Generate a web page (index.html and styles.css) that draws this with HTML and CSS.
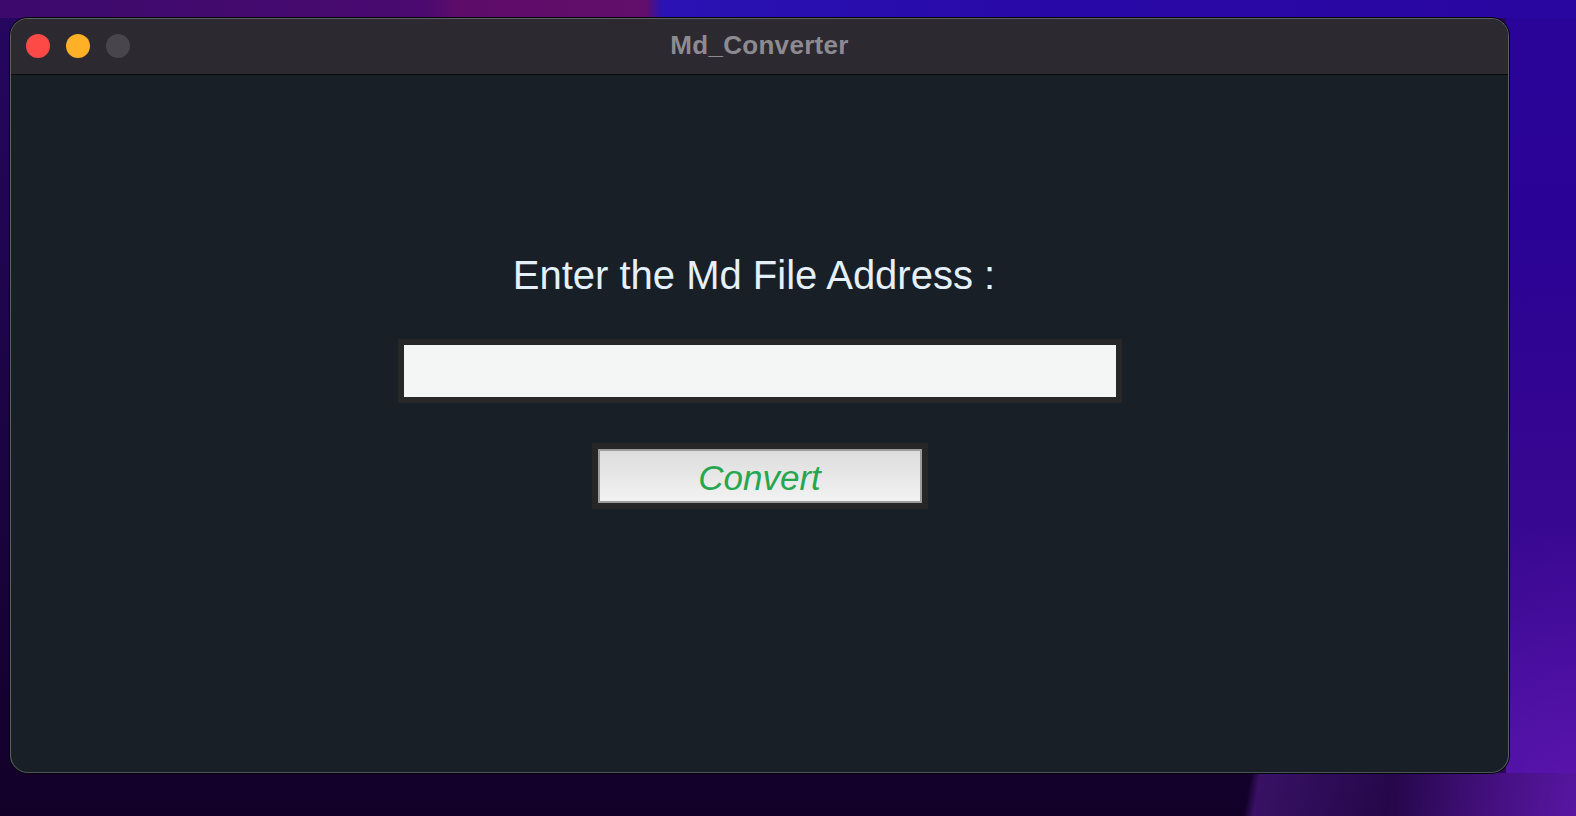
FILE: index.html
```html
<!DOCTYPE html>
<html lang="en">
<head>
<meta charset="utf-8">
<title>Md_Converter</title>
<link rel="stylesheet" href="styles.css">
</head>
<body>
<div class="desktop">
  <div class="window">
    <div class="titlebar">
      <div class="lights">
        <span class="light red"></span>
        <span class="light yellow"></span>
        <span class="light gray"></span>
      </div>
      <div class="title">Md_Converter</div>
    </div>
    <div class="content">
      <div class="label">Enter the Md File Address :&nbsp;</div>
      <input class="address" type="text">
      <button class="convert" type="button">Convert</button>
    </div>
  </div>
</div>
</body>
</html>
```

FILE: styles.css
```css
html, body {
  margin: 0;
  padding: 0;
}

body {
  width: 1576px;
  height: 816px;
  overflow: hidden;
  font-family: "Liberation Sans", Arial, sans-serif;
}

.desktop {
  width: 1576px;
  height: 816px;
  padding: 18px 0 0 10px;
  box-sizing: border-box;
  background:
    linear-gradient(100deg, transparent 0 79%, rgba(80, 28, 140, 0.6) 79.6%, rgba(55, 14, 105, 0.5) 88%, rgba(95, 25, 175, 0.75) 100%) bottom / 100% 43px no-repeat,
    radial-gradient(ellipse 260px 420px at 100% 100%, rgba(100, 20, 180, 0.6), transparent 70%),
    linear-gradient(90deg, #3c0a6c 0%, #4a0a70 27%, #5e0c6a 29%, #620e6a 41%, #2a12b4 42%, #2808a6 70%, #2a06a0 100%) top / 100% 18px no-repeat,
    linear-gradient(180deg, #2a0398 0%, #2a0396 30%, #340590 55%, #3c0a94 80%, #4a12a0 100%) right top / 70px 773px no-repeat,
    linear-gradient(180deg, #260660 0%, #1a0440 60%, #130028 100%);
}

.window {
  width: 1499px;
  height: 755px;
  box-sizing: border-box;
  border: 1px solid #5d6064;
  border-bottom-color: #4a5357;
  border-radius: 18px;
  box-shadow: 0 0 0 1px #050507;
  overflow: hidden;
  display: flex;
  flex-direction: column;
  background: #181f26;
}

.titlebar {
  height: 55px;
  flex: none;
  background: #2c2930;
  border-bottom: 1px solid #0a0a0c;
  display: flex;
  align-items: center;
  position: relative;
}

.lights {
  display: flex;
  gap: 16px;
  padding-left: 15px;
  padding-bottom: 1px;
}

.light {
  width: 24px;
  height: 24px;
  border-radius: 50%;
  display: block;
}

.light.red { background: #fe4a47; }
.light.yellow { background: #feb026; }
.light.gray { background: #48454c; }

.title {
  position: absolute;
  left: 0;
  right: 0;
  top: 0;
  bottom: 0;
  display: flex;
  align-items: center;
  justify-content: center;
  font-weight: bold;
  font-size: 26px;
  color: #8d8b91;
  padding-bottom: 3px;
  letter-spacing: 0.3px;
}

.content {
  flex: 1;
  display: flex;
  flex-direction: column;
  align-items: center;
  padding-top: 177px;
}

.label {
  font-size: 40px;
  line-height: 46px;
  color: #e4f0fa;
  white-space: nowrap;
}

.address {
  margin-top: 41px;
  width: 724px;
  height: 64px;
  box-sizing: border-box;
  border: 6px solid #272727;
  background: #f4f6f5;
  outline: none;
  padding: 0 6px;
  font-size: 20px;
  font-family: "Liberation Sans", Arial, sans-serif;
}

.convert {
  margin-top: 40px;
  width: 336px;
  height: 66px;
  box-sizing: border-box;
  border: 6px solid #262626;
  box-shadow: inset 0 0 0 2px #9b9b9b;
  background: linear-gradient(180deg, #dcdcdc 0%, #f3f3f3 100%);
  font-family: "Liberation Sans", Arial, sans-serif;
  font-style: italic;
  font-size: 35px;
  color: #27a64f;
  padding: 3px 0 0 0;
  display: flex;
  align-items: center;
  justify-content: center;
  cursor: pointer;
}
```
